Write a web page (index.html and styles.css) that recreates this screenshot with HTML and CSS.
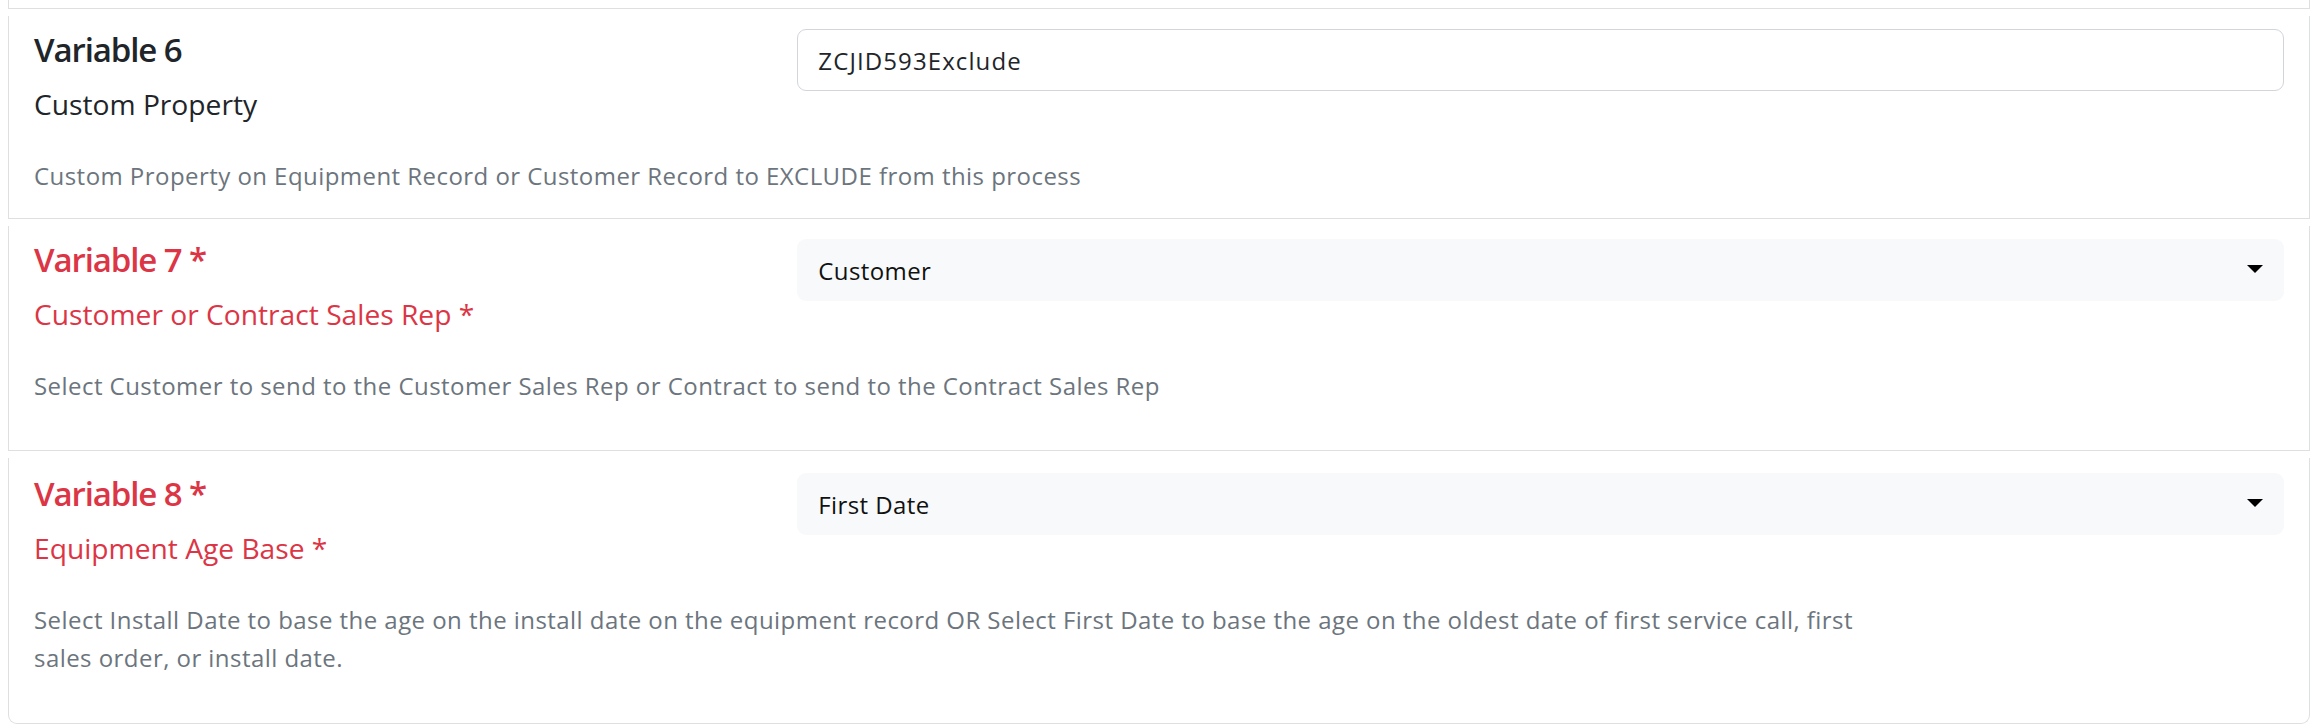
FILE: index.html
```html
<!DOCTYPE html>
<html lang="en">
<head>
<meta charset="utf-8">
<title>Variables</title>
<link rel="stylesheet" href="styles.css">
</head>
<body>
<div class="stack">
  <div class="card stub"></div>

  <section class="card card-compact">
    <div class="card-grid">
      <div class="labels">
        <h4 class="title">Variable 6</h4>
        <div class="subtitle">Custom Property</div>
      </div>
      <div class="control">
        <div class="input">ZCJID593Exclude</div>
      </div>
    </div>
    <p class="desc">Custom Property on Equipment Record or Customer Record to EXCLUDE from this process</p>
  </section>

  <section class="card required">
    <div class="card-grid">
      <div class="labels">
        <h4 class="title">Variable 7 *</h4>
        <div class="subtitle">Customer or Contract Sales Rep *</div>
      </div>
      <div class="control">
        <div class="select"><span>Customer</span><svg class="caret" width="16" height="8" viewBox="0 0 16 8"><polygon points="0,0 16,0 8,8" fill="#000"/></svg></div>
      </div>
    </div>
    <p class="desc">Select Customer to send to the Customer Sales Rep or Contract to send to the Contract Sales Rep</p>
  </section>

  <section class="card required last">
    <div class="card-grid">
      <div class="labels">
        <h4 class="title">Variable 8 *</h4>
        <div class="subtitle">Equipment Age Base *</div>
      </div>
      <div class="control">
        <div class="select"><span>First Date</span><svg class="caret" width="16" height="8" viewBox="0 0 16 8"><polygon points="0,0 16,0 8,8" fill="#000"/></svg></div>
      </div>
    </div>
    <p class="desc">Select Install Date to base the age on the install date on the equipment record OR Select First Date to base the age on the oldest date of first service call, first sales order, or install date.</p>
  </section>
</div>
</body>
</html>
```
FILE: styles.css
```css
* { box-sizing: border-box; }

html, body { background: #ffffff; }

body {
  margin: 0 8px;
  font-family: "Open Sans", "Noto Sans", sans-serif;
  color: #212529;
}

.stack {
  display: flex;
  flex-direction: column;
  gap: 7px;
}

.card {
  border: 1px solid #dedfe1;
  border-top: 0;
  background: #ffffff;
  padding: 13px 25px 45px 25px;
}

.card.stub {
  height: 9px;
  padding: 0;
}

.card.card-compact { padding-bottom: 23px; }

.card.last {
  padding-top: 15px;
  padding-bottom: 46px;
  border-radius: 0 0 9px 9px;
}

.card-grid {
  display: grid;
  grid-template-columns: 1fr 2fr;
  column-gap: 20px;
  align-items: start;
}

.title {
  margin: 0;
  font-size: 33px;
  line-height: 42px;
  font-weight: 600;
  letter-spacing: -1.1px;
}

.subtitle {
  margin-top: 15px;
  font-size: 28.2px;
  line-height: 36px;
}

.required .title,
.required .subtitle { color: #dc3545; }

.desc {
  margin: 35px 0 0 0;
  max-width: 1870px;
  font-size: 24px;
  line-height: 38px;
  color: #6c757d;
  letter-spacing: 0.45px;
}

.input,
.select {
  height: 62px;
  border-radius: 9px;
  font-size: 24px;
  display: flex;
  align-items: center;
  letter-spacing: 0.4px;
}

.input {
  border: 1px solid #d2d5dc;
  padding: 0 20px;
  color: #212529;
  letter-spacing: 1.1px;
}

.select {
  background: #f8f9fa;
  padding: 0 21px 0 21px;
  justify-content: space-between;
  color: #111;
}

.caret { display: block; margin-top: -3px; }
```
